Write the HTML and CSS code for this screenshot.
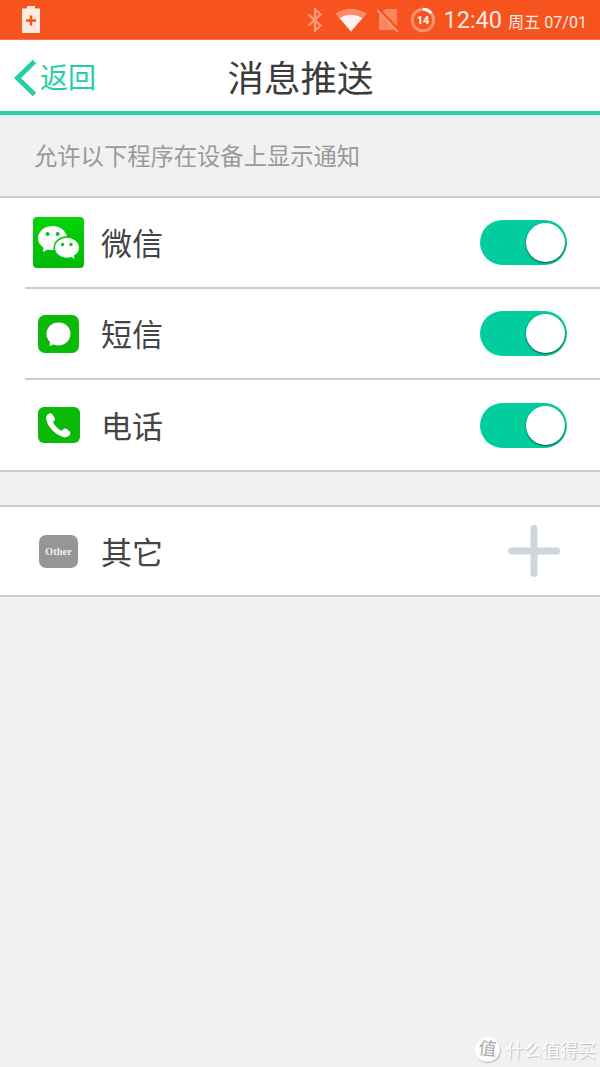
FILE: index.html
```
<!DOCTYPE html>
<html lang="zh-CN">
<head>
    <meta charset="UTF-8">
    <meta name="viewport" content="width=device-width, initial-scale=1.0">
    <title>消息推送</title>
    <link rel="stylesheet" href="styles.css">
</head>
<body>
    <div class="status-bar">
        <svg class="battery" width="18" height="27" viewBox="0 0 18 27">
            <path d="M5 0h8v2.500h5V27H0V2.500h5z" fill="#ffeae3"/>
            <path d="M9 9.500v10M4 14.500h10" stroke="#f6531f" stroke-width="2.500"/>
        </svg>
        <div class="status-icons">
            <svg class="bluetooth" width="16" height="24" viewBox="0 0 16 24">
                <path d="M1.500 6.500L13.500 17.500L8 22.500V1.500L13.500 6.500L1.500 17.500" fill="none" stroke="#fb9a79" stroke-width="2.300"/>
            </svg>
            <svg class="wifi" width="32" height="24" viewBox="0 0 32 24">
                <path d="M0 5.500Q16-4 32 5.500L16 23.500z" fill="#fa8b65"/>
                <path d="M4.500 10Q16 3.500 27.500 10L16 23.500z" fill="#fff2ed"/>
            </svg>
            <svg class="no-sim" width="22" height="24" viewBox="0 0 22 24">
                <path d="M8 1h12v21H2V7z" fill="#fa875f"/>
                <path d="M0-1L23 23" stroke="#f6531f" stroke-width="2.500"/>
                <path d="M0 2L21 24" stroke="#fa9874" stroke-width="2"/>
            </svg>
            <svg class="battery-ring" width="26" height="26" viewBox="0 0 26 26">
                <circle cx="13" cy="13" r="10.700" fill="none" stroke="#fa906c" stroke-width="3"/>
                <path d="M13 2.300A10.700 10.700 0 0 1 21.200 6.100" fill="none" stroke="#fff" stroke-width="3"/>
                <text x="13" y="17" text-anchor="middle">14</text>
            </svg>
            <span class="time">12:40</span>
            <span class="date">周五 07/01</span>
        </div>
    </div>

    <div class="header">
        <a class="back">
            <svg width="23" height="38" viewBox="0 0 23 38">
                <path d="M20.500 2.500L3.500 19L20.500 35.500" fill="none" stroke="#24cfa5" stroke-width="5"/>
            </svg>
            <span>返回</span>
        </a>
        <h1>消息推送</h1>
    </div>

    <p class="hint">允许以下程序在设备上显示通知</p>

    <div class="list">
        <div class="row">
            <div class="icon">
                <svg width="51" height="51" viewBox="0 0 51 51">
                    <defs>
                        <linearGradient id="wechat" x1="0" y1="0" x2="0" y2="1">
                            <stop offset="0" stop-color="#06d40b"/>
                            <stop offset="1" stop-color="#02b80a"/>
                        </linearGradient>
                    </defs>
                    <rect width="51" height="51" rx="4" fill="url(#wechat)"/>
                    <path d="M19.500 9C11.500 9 5 14.500 5 21.200c0 3.800 2 7 5.300 9.200L10 35l5-2.600c1.500.4 3 .6 4.500.6C27.500 33 34 27.900 34 21.200S27.500 9 19.500 9z" fill="#fff"/>
                    <path d="M34 20c-7 0-12.700 4.800-12.700 10.700S27 41.400 34 41.400c1.500 0 2.800-.2 4-.6l4.500 2.300-.8-4.300c3-1.900 5-4.800 5-8.100C46.700 24.800 41 20 34 20z" fill="#fff" stroke="#04c50b" stroke-width="1.500"/>
                    <g fill="#04c50b">
                        <circle cx="14.500" cy="17" r="2"/>
                        <circle cx="24.700" cy="17" r="2"/>
                        <circle cx="29.500" cy="27.500" r="1.700"/>
                        <circle cx="38" cy="27.500" r="1.700"/>
                    </g>
                </svg>
            </div>
            <span class="label">微信</span>
            <div class="switch"><div class="knob"></div></div>
        </div>
        <div class="row">
            <div class="icon">
                <svg width="41" height="38" viewBox="0 0 41 38">
                    <rect width="41" height="38" rx="7" fill="#0bb908"/>
                    <path d="M20.500 7.500c-6.800 0-12 4.900-12 11.200 0 3.400 1.300 6 3.500 8.200L11.500 31l4.200-1.500c1.500.6 3 .9 4.800.9 6.700 0 12-5.200 12-11.700S27.200 7.500 20.500 7.500z" fill="#fff"/>
                </svg>
            </div>
            <span class="label">短信</span>
            <div class="switch"><div class="knob"></div></div>
        </div>
        <div class="row phone">
            <div class="icon">
                <svg width="42" height="36" viewBox="0 0 42 36">
                    <rect width="42" height="36" rx="6" fill="#0bb908"/>
                    <path d="M11.500 6.500C9 7.500 7.800 9 8.200 12c1.200 7.500 8.800 15.500 17 18 3 .8 5.500-.2 6.800-2.500.6-1.200.5-2.300-.6-3.300l-2.600-2.200c-1.200-.9-2.500-.8-3.500.2l-1.500 1.500c-3.300-1.200-6.900-4.700-8.800-8.700l1.300-1.300c.8-.9.900-1.900.3-3l-2.300-3.400c-.8-1-1.700-1.200-2.800-.8z" fill="#fff"/>
                </svg>
            </div>
            <span class="label">电话</span>
            <div class="switch"><div class="knob"></div></div>
        </div>
    </div>

    <div class="list other">
        <div class="row">
            <div class="icon"><span class="other-icon">Other</span></div>
            <span class="label">其它</span>
            <svg class="plus" width="52" height="52" viewBox="0 0 52 52">
                <path d="M26 3.500v45M3.500 26h45" stroke="#d0d6da" stroke-width="7" stroke-linecap="round"/>
            </svg>
        </div>
    </div>

    <div class="watermark">
        <span class="logo">值</span>
        <span>什么值得买</span>
    </div>
</body>
</html>
```

FILE: styles.css
```
* {
    box-sizing: border-box;
}

body {
    margin: 0;
    height: 1067px;
    display: flex;
    flex-direction: column;
    overflow: hidden;
    background-color: #f1f1f1;
    color: #444;
    font-family: Roboto, "Noto Sans CJK SC", sans-serif;
}

/* status bar */
.status-bar {
    height: 40px;
    flex: none;
    display: flex;
    justify-content: space-between;
    padding: 0 13px 0 22px;
    background-color: #f6531f;
    border-bottom: 1px solid #fa7245;
    color: #ffe9e1;
}

.battery {
    margin-top: 6px;
}

.status-icons {
    display: flex;
    align-items: center;
    white-space: nowrap;
}

.wifi {
    margin-left: 12px;
}

.no-sim {
    margin-left: 10px;
}

.battery-ring {
    margin-left: 11px;
}

.battery-ring text {
    fill: #fff;
    font-size: 11px;
    font-weight: bold;
}

.time {
    margin-left: 7px;
    font-size: 23.5px;
    line-height: 40px;
    padding-top: 1px;
}

.date {
    margin-left: 6px;
    font-size: 16.1px;
    line-height: 40px;
    padding-top: 6px;
}

/* title bar */
.header {
    height: 75px;
    flex: none;
    display: grid;
    grid-template-columns: 150px 1fr 150px;
    align-items: center;
    background-color: #fff;
    border-bottom: 4px solid #24d3a7;
}

.back {
    display: flex;
    align-items: center;
    padding: 4px 0 0 14px;
    color: #24cfa5;
    font-size: 28px;
    line-height: 40px;
}

.back span {
    margin-left: 3px;
    padding-top: 3px;
}

h1 {
    margin: 8px 0 0;
    padding-left: 1px;
    font-size: 36.5px;
    font-weight: normal;
    line-height: 50px;
    text-align: center;
    color: #3c3c3c;
}

.hint {
    height: 81px;
    flex: none;
    margin: 0;
    padding-left: 34px;
    font-size: 23.3px;
    line-height: 85px;
    color: #9a9a9a;
}

/* lists */
.list {
    flex: none;
    background-color: #fff;
    border-top: 2px solid #cdcdcd;
    border-bottom: 2px solid #cdcdcd;
}

.other {
    margin-top: 33px;
}

.row {
    position: relative;
    height: 91px;
    display: flex;
    align-items: center;
    padding: 0 33px 2px 33px;
}

/* separator starts a little in from the left */
.row + .row::before {
    content: "";
    position: absolute;
    top: -2px;
    left: 25px;
    right: 0;
    height: 2px;
    background-color: #cdcdcd;
}

.row.phone {
    height: 90px;
    padding-bottom: 0;
}

.other .row {
    height: 88px;
    padding-bottom: 0;
}

.icon {
    width: 51px;
    display: flex;
    justify-content: center;
}

.label {
    flex: 1;
    margin-left: 17px;
    padding-top: 5px;
    font-size: 31px;
    line-height: 50px;
}

.switch {
    width: 87px;
    height: 45px;
    padding: 3px 2px;
    display: flex;
    justify-content: flex-end;
    border-radius: 23px;
    background-color: #02cd9d;
}

.knob {
    width: 39px;
    height: 39px;
    border-radius: 50%;
    background-color: #fff;
    box-shadow: 0 1px 2px rgba(0, 0, 0, 0.6);
}

.other-icon {
    width: 39px;
    height: 33px;
    border-radius: 7px;
    background-color: #969696;
    color: #eee;
    font: bold 10.5px/33px "Liberation Serif", serif;
    text-align: center;
}

.plus {
    margin-right: 7px;
}

.watermark {
    margin-top: auto;
    height: 36px;
    display: flex;
    justify-content: flex-end;
    align-items: center;
    padding-right: 4px;
    font-size: 18px;
    color: #fff;
    text-shadow: 1px 1px 1px #bbb;
}

.logo {
    width: 25px;
    height: 25px;
    margin-right: 6px;
    border-radius: 50%;
    background-color: #fff;
    box-shadow: 1px 1px 1px #bbb;
    color: #aaa;
    line-height: 24px;
    text-align: center;
    text-shadow: none;
    transform: rotate(6deg);
}
```
